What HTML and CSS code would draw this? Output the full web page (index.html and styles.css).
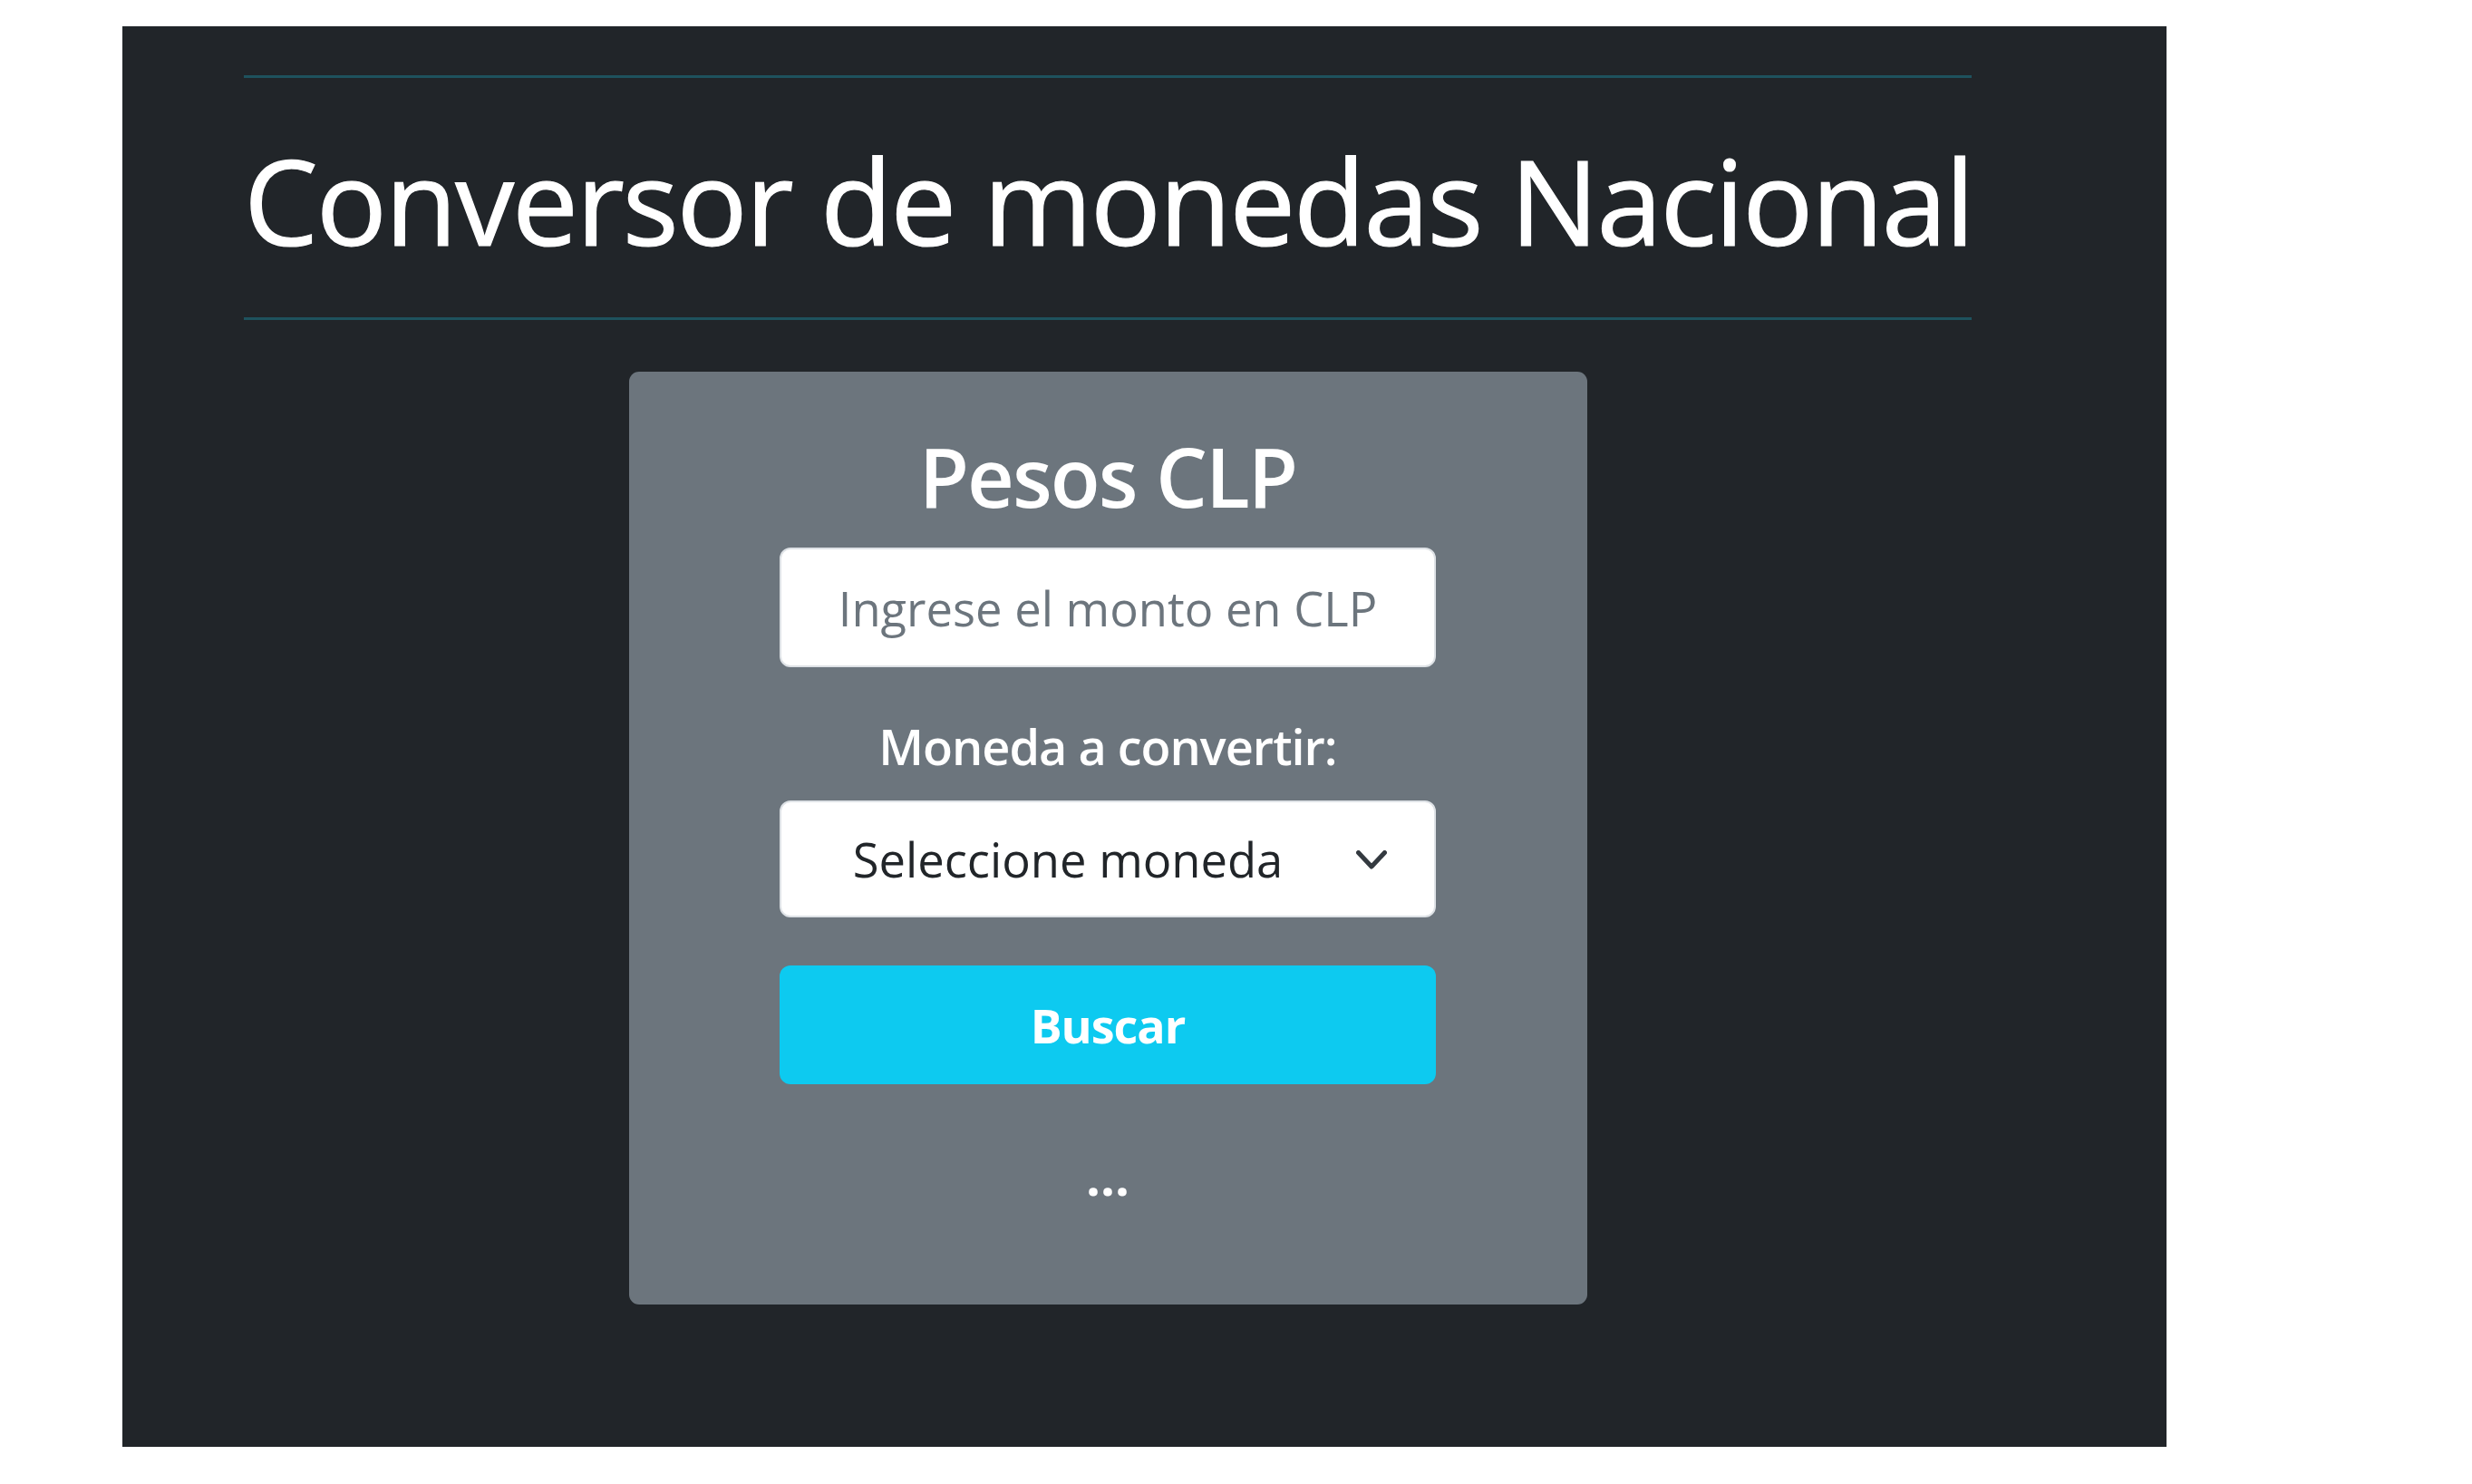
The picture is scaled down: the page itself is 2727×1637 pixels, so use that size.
FILE: index.html
```html
<!DOCTYPE html>
<html lang="es">
<head>
<meta charset="utf-8">
<title>Conversor de monedas Nacional</title>
<link rel="stylesheet" href="styles.css">
</head>
<body>
<div class="page">
  <main class="panel">
    <div class="rule"></div>
    <h1 class="title">Conversor de monedas Nacional</h1>
    <div class="rule"></div>
    <section class="card">
      <h2 class="card-title">Pesos CLP</h2>
      <input class="field" type="text" placeholder="Ingrese el monto en CLP">
      <label class="label" for="moneda">Moneda a convertir:</label>
      <div class="select-wrap">
        <select class="select" id="moneda">
          <option>Seleccione moneda</option>
        </select>
        <svg class="chevron" width="34" height="21" viewBox="0 0 34 21" aria-hidden="true">
          <polyline points="2.5,2.5 17,18 31.5,2.5" fill="none" stroke="#343a40" stroke-width="5" stroke-linecap="round" stroke-linejoin="round"/>
        </svg>
      </div>
      <button class="btn" type="button">Buscar</button>
      <p class="result">...</p>
    </section>
  </main>
</div>
</body>
</html>
```

FILE: styles.css
```css
html, body {
  margin: 0;
  background: #ffffff;
}

body {
  font-family: "Open Sans", "Noto Sans", sans-serif;
}

.page {
  padding: 29px 0 0 135px;
}

.panel {
  box-sizing: border-box;
  width: 2255px;
  height: 1567px;
  background: #212529;
  padding: 54px 215px 0 134px;
  display: flex;
  flex-direction: column;
}

.rule {
  height: 3px;
  background: rgb(30, 82, 93);
  flex: none;
}

.title {
  margin: 57px 0 51px;
  font-size: 130px;
  font-weight: 400;
  line-height: 156px;
  letter-spacing: -2.2px;
  color: #ffffff;
  -webkit-text-stroke: 1.2px #ffffff;
  white-space: nowrap;
}

.card {
  box-sizing: border-box;
  align-self: center;
  margin-top: 57px;
  width: 1057px;
  height: 1029px;
  background: #6c757d;
  border-radius: 11px;
  display: flex;
  flex-direction: column;
  align-items: center;
  padding-top: 61px;
}

.card-title {
  margin: 0;
  font-size: 90px;
  font-weight: 600;
  line-height: 108px;
  letter-spacing: -2px;
  color: #ffffff;
}

.field {
  box-sizing: border-box;
  margin-top: 25px;
  width: 724px;
  height: 132px;
  border: 2px solid #dee2e6;
  border-radius: 12px;
  background: #ffffff;
  font-family: inherit;
  font-size: 52.5px;
  color: #212529;
  text-align: center;
  padding: 0 30px;
  outline: none;
}

.field::placeholder {
  color: #6c757d;
  opacity: 1;
}

.label {
  margin-top: 55px;
  font-size: 54px;
  font-weight: 600;
  line-height: 65px;
  letter-spacing: -1px;
  color: #ffffff;
}

.select-wrap {
  position: relative;
  margin-top: 27px;
  width: 724px;
  height: 129px;
}

.select {
  box-sizing: border-box;
  width: 100%;
  height: 100%;
  appearance: none;
  -webkit-appearance: none;
  border: 2px solid #dee2e6;
  border-radius: 12px;
  background: #ffffff;
  font-family: inherit;
  font-size: 52.5px;
  color: #212529;
  padding: 0 132px 0 44px;
  text-align: center;
  text-align-last: center;
  outline: none;
}

.chevron {
  position: absolute;
  right: 54px;
  top: 55px;
  pointer-events: none;
}

.btn {
  box-sizing: border-box;
  margin-top: 53px;
  width: 724px;
  height: 131px;
  border: none;
  border-radius: 12px;
  background: #0dcaf0;
  color: #ffffff;
  font-family: inherit;
  font-size: 52px;
  font-weight: 700;
  letter-spacing: -1px;
}

.result {
  margin: 68px 0 0;
  font-size: 56px;
  font-weight: 700;
  line-height: 67px;
  color: #ffffff;
}
```
